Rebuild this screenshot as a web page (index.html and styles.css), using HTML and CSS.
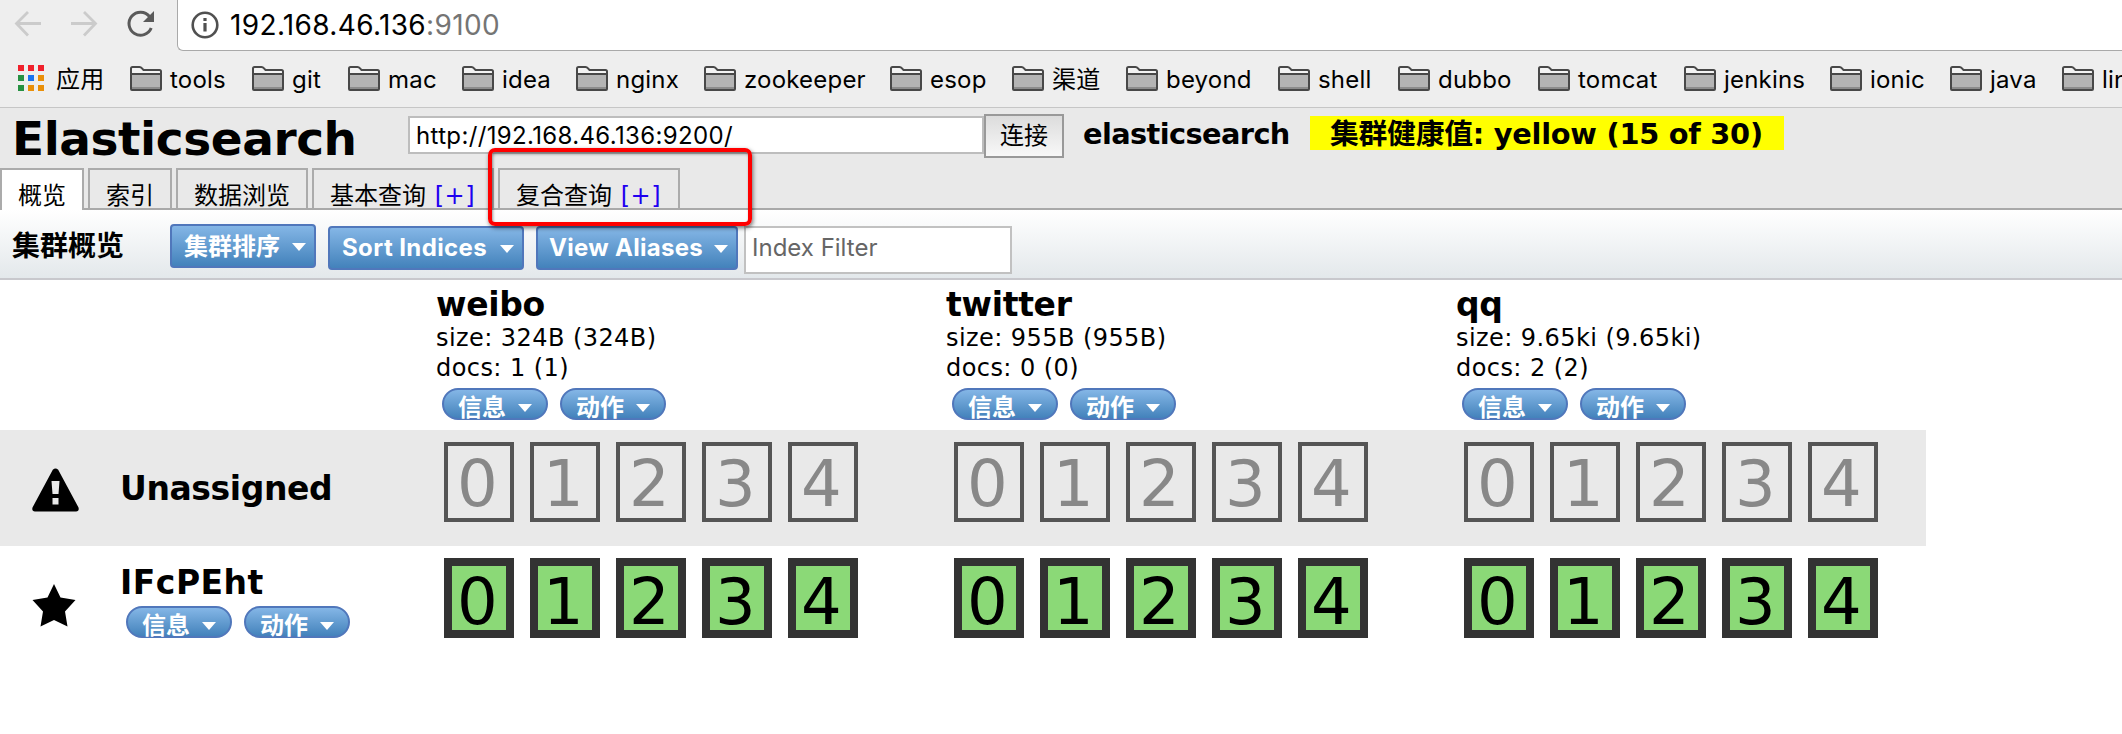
FILE: index.html
```html
<!DOCTYPE html>
<html lang="zh-CN">
<head>
<meta charset="utf-8">
<title>Elasticsearch</title>
<link rel="stylesheet" href="styles.css">
</head>
<body>
<svg class="defs" width="0" height="0">
  <symbol id="folder" viewBox="0 0 32 25">
    <path d="M1 23V2.5Q1 1 2.500 1H9.500Q11 1 11.800 2.200L13.500 4H29.500Q31 4 31 5.500V23Q31 24 30 24H2Q1 24 1 23Z" fill="#f3f3f3"/>
    <path d="M2 8H30V23H2Z" fill="#b4b4b4"/>
    <path d="M2 21H30V23H2Z" fill="#8c8c8c"/>
    <path d="M1 23V2.500Q1 1 2.500 1H9.500Q11 1 11.800 2.200L13.500 4H29.500Q31 4 31 5.500V23Q31 24 30 24H2Q1 24 1 23ZM1 8H31" fill="none" stroke="#484848" stroke-width="2"/>
  </symbol>
</svg>

<div class="browser-bar">
  <svg class="nav-icons" width="177" height="51" viewBox="0 0 177 51" fill="none">
    <g stroke="#cbcbcb" stroke-width="2.800">
      <path d="M41 23.500H17M28 12L16.500 23.500L28 35.500"/>
      <path d="M71 23.500H95M84 12L95.500 23.500L84 35.500"/>
    </g>
    <path d="M149.500 16.500A11.500 11.500 0 1 0 151.200 28" stroke="#5a5a5a" stroke-width="3"/>
    <path d="M154 11V22H143Z" fill="#5a5a5a"/>
  </svg>
  <div class="omnibox">
    <svg width="28" height="28" viewBox="0 0 28 28"><circle cx="14" cy="14" r="12.300" fill="none" stroke="#505050" stroke-width="2.600"/><path d="M12.400 7H15.600V10H12.400ZM12.400 12H15.600V20.500H12.400Z" fill="#505050"/></svg>
    <span class="address">192.168.46.136<span class="port">:9100</span></span>
  </div>
</div>

<nav class="bookmarks">
  <span class="bm w112 apps"><svg width="27" height="27" viewBox="0 0 27 27"><path d="M0 0H6V6H0ZM10 0H16V6H10ZM20 0H26V6H20Z" fill="#f0202b"/><path d="M0 10H6V16H0ZM0 20H6V26H0Z" fill="#269142"/><path d="M10 10H16V16H10Z" fill="#1a73f0"/><path d="M20 10H26V16H20ZM10 20H16V26H10ZM20 20H26V26H20Z" fill="#e98f09"/></svg>应用</span>
  <span class="bm w122"><svg width="32" height="25"><use href="#folder"/></svg>tools</span>
  <span class="bm w96"><svg width="32" height="25"><use href="#folder"/></svg>git</span>
  <span class="bm w114"><svg width="32" height="25"><use href="#folder"/></svg>mac</span>
  <span class="bm w114"><svg width="32" height="25"><use href="#folder"/></svg>idea</span>
  <span class="bm w128"><svg width="32" height="25"><use href="#folder"/></svg>nginx</span>
  <span class="bm w186"><svg width="32" height="25"><use href="#folder"/></svg>zookeeper</span>
  <span class="bm w122"><svg width="32" height="25"><use href="#folder"/></svg>esop</span>
  <span class="bm w114"><svg width="32" height="25"><use href="#folder"/></svg>渠道</span>
  <span class="bm w152"><svg width="32" height="25"><use href="#folder"/></svg>beyond</span>
  <span class="bm w120"><svg width="32" height="25"><use href="#folder"/></svg>shell</span>
  <span class="bm w140"><svg width="32" height="25"><use href="#folder"/></svg>dubbo</span>
  <span class="bm w146"><svg width="32" height="25"><use href="#folder"/></svg>tomcat</span>
  <span class="bm w146"><svg width="32" height="25"><use href="#folder"/></svg>jenkins</span>
  <span class="bm w120"><svg width="32" height="25"><use href="#folder"/></svg>ionic</span>
  <span class="bm w112"><svg width="32" height="25"><use href="#folder"/></svg>java</span>
  <span class="bm"><svg width="32" height="25"><use href="#folder"/></svg>linux</span>
</nav>

<header class="header">
  <h1 class="brand">Elasticsearch</h1>
  <div class="server">http://192.168.46.136:9200/</div>
  <div class="connect">连接</div>
  <div class="cluster-name">elasticsearch</div>
  <div class="health">集群健康值: yellow (15 of 30)</div>
</header>

<div class="tabs">
  <div class="tab active">概览</div>
  <div class="tab">索引</div>
  <div class="tab wide">数据浏览</div>
  <div class="tab query">基本查询 <span class="plus">[+]</span></div>
  <div class="tab query">复合查询 <span class="plus">[+]</span></div>
</div>
<div class="highlight"></div>

<div class="toolbar">
  <h2 class="toolbar-title">集群概览</h2>
  <div class="btn sort">集群排序<i class="caret"></i></div>
  <div class="btn indices">Sort Indices<i class="caret"></i></div>
  <div class="btn aliases">View Aliases<i class="caret"></i></div>
  <div class="filter">Index Filter</div>
</div>

<main class="cluster">
  <div class="row head">
    <div class="node"></div>
    <div class="index"><h3>weibo</h3><p>size: 324B (324B)</p><p>docs: 1 (1)</p><div class="pills"><span class="pill">信息<i class="caret"></i></span><span class="pill">动作<i class="caret"></i></span></div></div>
    <div class="index"><h3>twitter</h3><p>size: 955B (955B)</p><p>docs: 0 (0)</p><div class="pills"><span class="pill">信息<i class="caret"></i></span><span class="pill">动作<i class="caret"></i></span></div></div>
    <div class="index"><h3>qq</h3><p>size: 9.65ki (9.65ki)</p><p>docs: 2 (2)</p><div class="pills"><span class="pill">信息<i class="caret"></i></span><span class="pill">动作<i class="caret"></i></span></div></div>
  </div>
  <div class="row unassigned">
    <div class="node">
      <svg class="warn" width="48" height="44" viewBox="0 0 48 44"><path fill-rule="evenodd" d="M20.800 1.800Q23.500 -1 26.200 1.800L46.500 39.500Q47.500 43.300 44 43.500H3Q-.5 43.300 .5 39.500ZM19.500 13L20.500 26H26.500L27.500 13ZM20.500 30V36.500H26.500V30Z"/></svg>
      <div class="info"><h3>Unassigned</h3></div>
    </div>
    <div class="shards"><span>0</span><span>1</span><span>2</span><span>3</span><span>4</span></div>
    <div class="shards"><span>0</span><span>1</span><span>2</span><span>3</span><span>4</span></div>
    <div class="shards"><span>0</span><span>1</span><span>2</span><span>3</span><span>4</span></div>
  </div>
  <div class="row assigned">
    <div class="node">
      <svg class="star" width="44" height="43" viewBox="0 0 44 43"><path d="M22 0L28.500 13.500L43.500 16L33 27.500L35.500 42.500L22 36L8.500 42.500L11 27.500L.5 16L15.500 13.500Z"/></svg>
      <div class="info"><h3>IFcPEht</h3><div class="pills"><span class="pill">信息<i class="caret"></i></span><span class="pill">动作<i class="caret"></i></span></div></div>
    </div>
    <div class="shards"><span>0</span><span>1</span><span>2</span><span>3</span><span>4</span></div>
    <div class="shards"><span>0</span><span>1</span><span>2</span><span>3</span><span>4</span></div>
    <div class="shards"><span>0</span><span>1</span><span>2</span><span>3</span><span>4</span></div>
  </div>
</main>
</body>
</html>
```
FILE: styles.css
```css
* { box-sizing: border-box; }
body {
  margin: 0;
  width: 2122px;
  height: 734px;
  overflow: hidden;
  background: #fff;
  color: #000;
  font: 24px/30px "DejaVu Sans", "Noto Sans CJK SC", sans-serif;
  white-space: nowrap;
}
h1, h2, h3, p { margin: 0; }
.defs { display: none; }
svg { flex: none; }

/* browser chrome */
.browser-bar { display: flex; height: 51px; background: #eee; }
.omnibox {
  flex: 1;
  display: flex;
  gap: 11px;
  padding: 11px 0 0 13px;
  background: #fff;
  border: solid #a9a9a9;
  border-width: 0 0 1px 1px;
  border-radius: 0 0 0 6px;
}
.address { font: 28px/28px Inter, sans-serif; letter-spacing: .35px; }
.port { color: #757575; }
.bookmarks {
  display: flex;
  height: 57px;
  padding-left: 18px;
  overflow: hidden;
  background: #eee;
  border-bottom: 1px solid #c6c6c6;
  font: 24px/57px Inter, "Noto Sans CJK SC", sans-serif;
  letter-spacing: .2px;
}
.bm { display: flex; flex: none; gap: 8px; }
.bm svg { margin-top: 15px; }
.bm.apps { gap: 11px; }
.bm.apps svg { margin-top: 14px; }
.w96 { width: 96px; }
.w112 { width: 112px; }
.w114 { width: 114px; }
.w120 { width: 120px; }
.w122 { width: 122px; }
.w128 { width: 128px; }
.w140 { width: 140px; }
.w146 { width: 146px; }
.w152 { width: 152px; }
.w186 { width: 186px; }

/* header */
.header { display: flex; align-items: flex-start; height: 60px; padding-left: 12px; background: #e9e9e9; }
.header > div { flex: none; }
.brand { width: 396px; font-size: 47px; line-height: 62px; letter-spacing: -.45px; }
.server {
  width: 576px;
  height: 38px;
  margin-top: 8px;
  padding-left: 6px;
  background: #fff;
  border: 2px solid #bdbdbd;
  font: 24px/36px Inter, sans-serif;
  letter-spacing: .35px;
}
.connect {
  width: 80px;
  height: 44px;
  margin-top: 6px;
  border: 2px solid #999;
  background: linear-gradient(#dcdcdc, #f8f8f8);
  text-align: center;
  line-height: 40px;
}
.cluster-name { width: 246px; margin-top: 8px; padding-left: 19px; font-size: 28.800px; font-weight: bold; line-height: 36px; letter-spacing: -.6px; }
.health { width: 474px; height: 34px; margin-top: 8px; padding-left: 20px; background: #ff0; font-size: 28.800px; font-weight: bold; line-height: 36px; letter-spacing: -.25px; }

/* tabs */
.tabs { display: flex; gap: 4px; height: 42px; background: #e9e9e9; box-shadow: inset 0 -2px #a9a9a9; }
.tab { width: 84px; height: 40px; padding-left: 16px; border: 2px solid #ababab; border-bottom: 0; line-height: 52px; }
.tab.active { height: 42px; background: #fff; }
.tab.wide { width: 132px; }
.tab.query { width: 182px; }
.plus { margin-left: 1px; color: #2000f0; letter-spacing: .6px; }
.highlight {
  position: absolute;
  left: 488px;
  top: 148px;
  width: 264px;
  height: 78px;
  border: 4px solid #f00;
  border-radius: 7px;
  box-shadow: 1px 2px 4px rgba(0, 0, 0, .55), inset 1px 2px 3px rgba(0, 0, 0, .4);
}

/* toolbar */
.toolbar {
  display: flex;
  align-items: flex-start;
  height: 70px;
  padding: 16px 0 0 12px;
  background: linear-gradient(#fff, #e3e8eb);
  border-bottom: 2px solid #c8c8cd;
}
.toolbar-title { width: 158px; font-size: 28px; line-height: 42px; }
.btn, .pill {
  display: flex;
  justify-content: space-between;
  border: 2px solid #5077bb;
  background: linear-gradient(#84b6e6, #4382bb);
  color: #fff;
  font-weight: bold;
}
.btn { height: 44px; padding: 0 8px 0 12px; border-radius: 4px; font-family: Inter, "Noto Sans CJK SC", sans-serif; line-height: 40px; }
.sort { width: 146px; margin: -2px 12px 0 0; line-height: 42px; }
.indices { width: 196px; margin-right: 12px; letter-spacing: .4px; }
.aliases { width: 202px; margin-right: 6px; padding-left: 11px; letter-spacing: .3px; }
.caret { width: 14px; height: 8px; background: #fff; clip-path: polygon(0 0, 100% 0, 50% 100%); }
.btn .caret { margin-top: 17px; }
.filter { width: 268px; height: 48px; padding-left: 6px; background: #fff; border: 2px solid #c1c1c1; color: #666; font: 24px/40px Inter, sans-serif; }

/* cluster table */
.row { display: flex; width: 1926px; }
.head { height: 150px; }
.node { display: flex; flex: none; width: 436px; }
.index { flex: none; width: 510px; padding-top: 7px; }
h3 { font-size: 33px; line-height: 36px; }
.index h3 { letter-spacing: -.3px; }
.index p { line-height: 30px; letter-spacing: .43px; }
.pills { display: flex; gap: 12px; padding-left: 6px; }
.index .pills { margin-top: 5px; }
.pill { width: 106px; height: 32px; padding: 0 14px; border-radius: 16px; line-height: 36px; }
.pill .caret { margin-top: 14px; }
.unassigned { height: 116px; background: #e9e9e9; }
.assigned { height: 116px; }
.node svg { margin-left: 32px; }
.warn { margin-top: 38px; }
.star { margin-top: 38px; }
.info { margin-left: 40px; }
.star + .info { margin-left: 44px; }
.unassigned .info { padding-top: 41px; letter-spacing: -.4px; }
.assigned .info { padding-top: 19px; }
.assigned h3 { letter-spacing: .5px; }
.assigned .pills { margin-top: 5px; }
.shards { display: flex; flex: none; gap: 16px; width: 510px; padding: 12px 0 0 8px; }
.shards:last-child { width: 470px; }
.shards span { width: 70px; height: 80px; border: 4px solid #555; color: #888; padding-left: 9px; font-size: 64px; line-height: 76px; }
.assigned .shards span { border: 8px solid #333; background: #8bd977; color: #000; padding-left: 5px; line-height: 72px; }
```
